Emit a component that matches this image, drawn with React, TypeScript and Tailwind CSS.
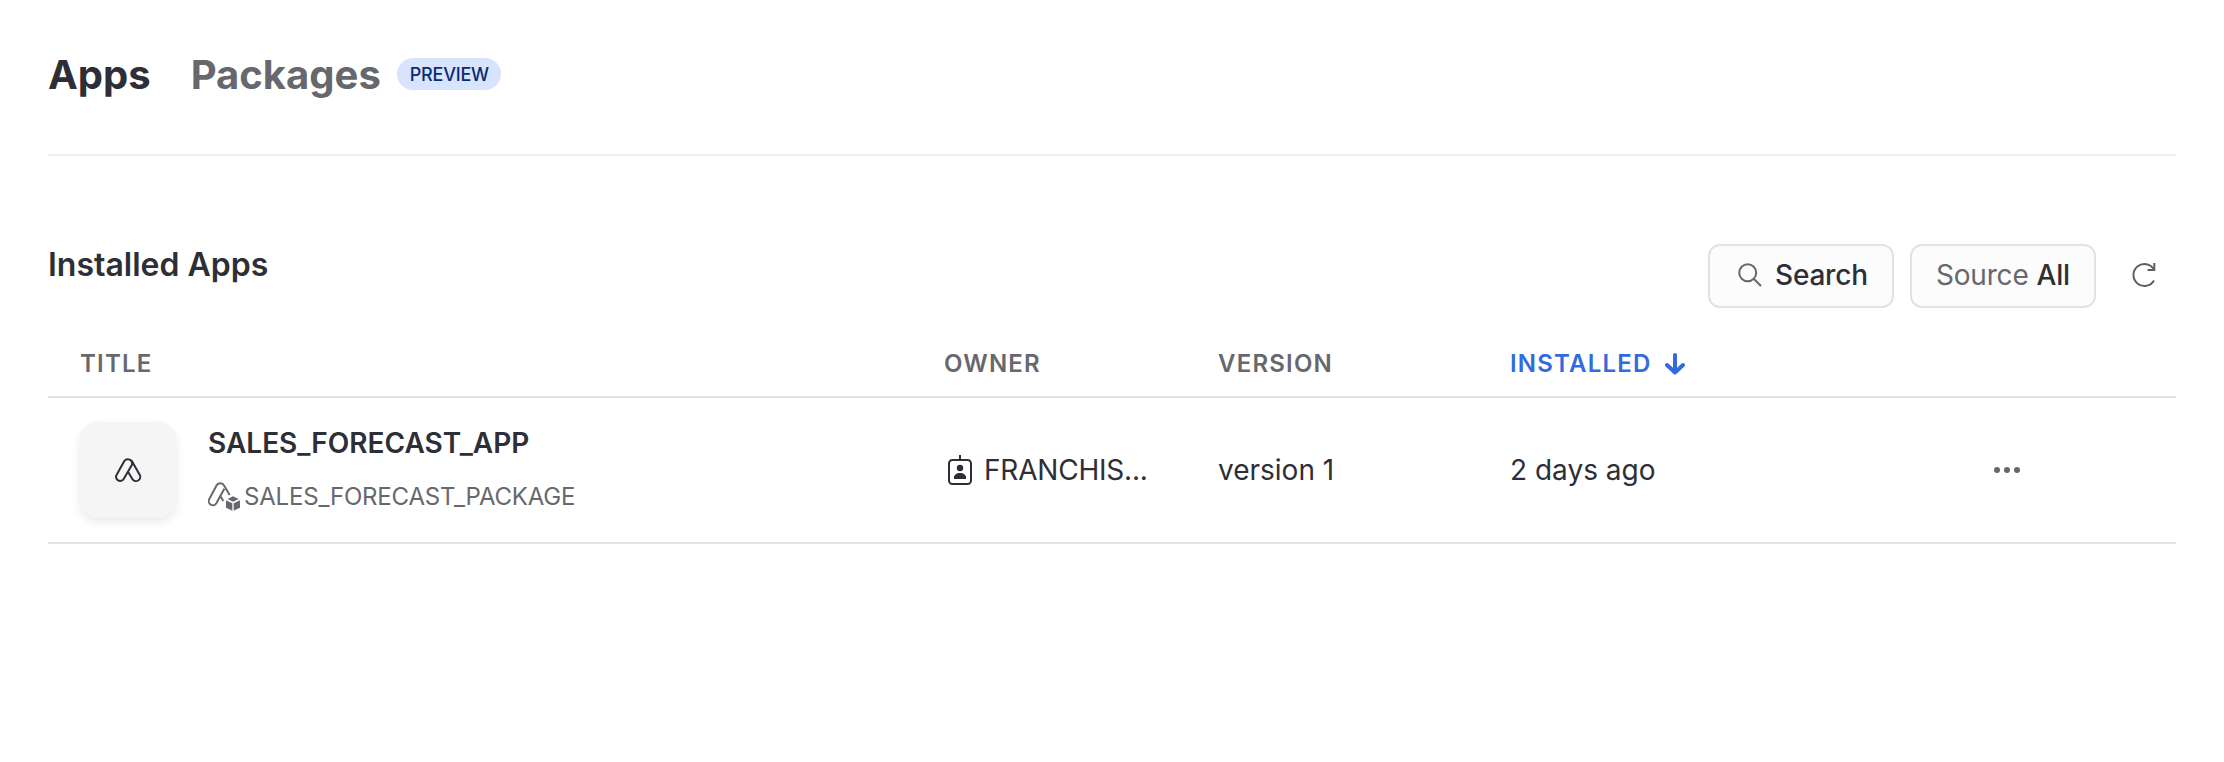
import type { ReactNode } from "react";

function NativeAppIcon() {
  return (
    <svg width="28" height="26" viewBox="0 0 84 78" fill="none" stroke="currentColor" strokeWidth="6" strokeLinejoin="round" strokeLinecap="round">
      <path d="M31 12 L8 53 A12 12 0 0 0 29 66 L54 23 A13 13 0 0 0 31 12 Z" />
      <path d="M54 13 L77 53 A12 12 0 0 1 55 66 L42.500 45" />
    </svg>
  );
}

function PackageIcon() {
  return (
    <svg width="32" height="32" viewBox="0 0 96 96" fill="none">
      <g stroke="currentColor" strokeWidth="6" strokeLinejoin="round">
        <path d="M46 60 L37 45 L25 67 A12 12 0 0 1 4 54 L26 13 A13 13 0 0 1 49 15 L65 42" />
        <path d="M37 45 L49 23" />
      </g>
      <g fill="currentColor">
        <path d="M75 46 L92 54 L75 62 L59 54 Z" />
        <path d="M54 58 L73 67 V89 L54 80 Z" />
        <path d="M96 58 L77 67 V89 L96 80 Z" />
      </g>
    </svg>
  );
}

function RoleIcon() {
  return (
    <svg width="24" height="30" viewBox="0 0 24 30" fill="none">
      <rect x="1" y="5" width="22" height="24" rx="3.500" stroke="currentColor" strokeWidth="2" />
      <path d="M12 0V5" stroke="currentColor" strokeWidth="2" />
      <circle cx="12" cy="13" r="3.200" fill="currentColor" />
      <path d="M6 24V22.500C6 19.800 8.500 18 12 18S18 19.800 18 22.500V24Z" fill="currentColor" />
    </svg>
  );
}

function SearchIcon() {
  return (
    <svg width="24" height="24" viewBox="0 0 24 24" fill="none" stroke="currentColor" strokeWidth="2">
      <circle cx="9.700" cy="9.700" r="8.500" />
      <path d="M15.700 15.700L23 23" />
    </svg>
  );
}

function RefreshIcon() {
  return (
    <svg width="24" height="26" viewBox="0 0 24 26" fill="none" stroke="currentColor" strokeWidth="2">
      <path d="M22 18.500A11 11 0 1 1 22 7.500" />
      <path d="M22.300 1V8H15.500" />
    </svg>
  );
}

function ArrowDown() {
  return (
    <svg width="22" height="22" viewBox="0 0 22 22" fill="none" stroke="currentColor" strokeWidth="4" strokeLinecap="round" strokeLinejoin="round">
      <path d="M11 2V19.500M3 12L11 19.500L19 12" />
    </svg>
  );
}

function ToolbarButton({ children }: { children: ReactNode }) {
  return (
    <button className="flex h-16 w-[186px] items-center rounded-xl border-2 border-[#e2e2e3] bg-[#fcfcfc] pb-0.5 pl-6 text-[28px] tracking-[-0.2px]">
      {children}
    </button>
  );
}

const columns = "grid grid-cols-[864px_274px_292px_484px_1fr] pl-8";

export default function App() {
  return (
    <main className="h-[762px] w-full overflow-hidden bg-white px-12 font-['Inter',sans-serif] text-[#2e2f36]">
      <header className="flex h-[156px] items-start border-b-2 border-[#f0f0f1] pt-[51px]">
        <h1 className="text-[40px] leading-[48px] font-bold">Apps</h1>
        <h1 className="ml-10 text-[40px] leading-[48px] font-bold text-[#67686e]">Packages</h1>
        <span className="mt-[7px] ml-4 flex h-8 w-[104px] items-center justify-center rounded-full bg-[#d8e4fd] pt-px pl-px text-[18px] font-medium tracking-[-0.2px] text-[#0b2b70]">
          PREVIEW
        </span>
      </header>

      <section className="flex h-[176px] items-start justify-between pt-[88px]">
        <h2 className="pt-px text-[32px] leading-[40px] font-semibold">Installed Apps</h2>
        <div className="flex items-center gap-4">
          <ToolbarButton>
            <span className="mr-[13px] ml-1 text-[#67686e]"><SearchIcon /></span>
            <span className="font-medium">Search</span>
          </ToolbarButton>
          <ToolbarButton>
            <span className="text-[#67686e]">Source</span>
            <span className="ml-2 font-medium">All</span>
          </ToolbarButton>
          <button className="flex h-16 w-16 items-center justify-center pb-0.5 text-[#5f6066]"><RefreshIcon /></button>
        </div>
      </section>

      <div className={`${columns} h-[66px] items-center border-b-2 border-[#e2e2e3] text-[24px] font-semibold tracking-[1.2px] text-[#67686e]`}>
        <span>TITLE</span>
        <span>OWNER</span>
        <span>VERSION</span>
        <span className="flex items-center gap-3 text-[#336ae0]">INSTALLED <ArrowDown /></span>
      </div>

      <div className={`${columns} h-[146px] items-center border-b-2 border-[#e2e2e3] text-[28px]`}>
        <div className="flex items-center gap-8">
          <div className="flex h-24 w-24 items-center justify-center rounded-[18px] bg-[#f5f5f5] shadow-[0_4px_10px_rgba(0,0,0,0.09)]">
            <NativeAppIcon />
          </div>
          <div>
            <div className="leading-9 font-semibold">SALES_FORECAST_APP</div>
            <div className="mt-[18px] flex h-9 items-center gap-1 text-[24px] tracking-[-0.19px] text-[#67686e]">
              <PackageIcon />
              SALES_FORECAST_PACKAGE
            </div>
          </div>
        </div>
        <div className="flex items-center gap-3 pl-1"><RoleIcon /><span className="tracking-[-0.2px]">FRANCHIS...</span></div>
        <span>version 1</span>
        <span>2 days ago</span>
        <button className="flex gap-1 text-[#67686e]">
          <i className="size-1.5 rounded-full bg-current" />
          <i className="size-1.5 rounded-full bg-current" />
          <i className="size-1.5 rounded-full bg-current" />
        </button>
      </div>
    </main>
  );
}
